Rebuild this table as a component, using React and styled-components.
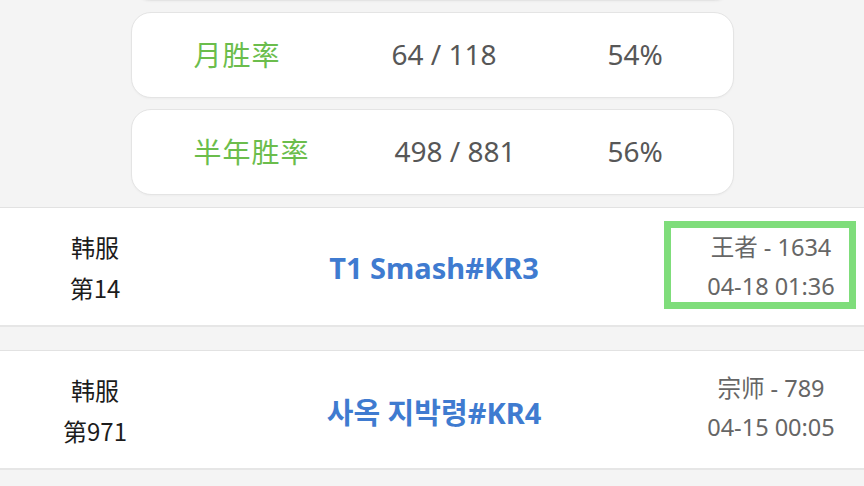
import React from "react";
import styled, { createGlobalStyle } from "styled-components";

const GlobalStyle = createGlobalStyle`
  html, body {
    margin: 0;
    padding: 0;
    background: #f4f4f4;
  }
  body {
    font-family: "Noto Sans", "Noto Sans CJK SC", sans-serif;
  }
`;

const Page = styled.div`
  width: 864px;
  height: 486px;
  overflow: hidden;
  background: #f4f4f4;
`;

const StatsList = styled.div`
  display: flex;
  flex-direction: column;
  align-items: center;
  gap: 11px;
  margin-top: -85px;
`;

const StatCard = styled.div`
  box-sizing: border-box;
  width: 603px;
  height: 86px;
  background: #fff;
  border: 1px solid #e4e4e4;
  border-radius: 20px;
  box-shadow: 0 1px 2px rgba(0, 0, 0, 0.03);
  display: grid;
  grid-template-columns: 198px 216px auto;
  align-items: center;
  padding-left: 62px;
  padding-bottom: 3px;
`;

const StatLabel = styled.div`
  font-family: "Noto Sans CJK SC", sans-serif;
  font-size: 28px;
  color: #6bbd4c;
  letter-spacing: 1px;
`;

const StatValue = styled.div`
  font-family: "Noto Sans", sans-serif;
  font-size: 28px;
  color: #575757;
  padding-left: ${(p) => p.$indent || 0}px;
`;

const RankList = styled.div`
  display: flex;
  flex-direction: column;
  gap: 23px;
  margin-top: 12px;
`;

const RankRow = styled.div`
  box-sizing: border-box;
  height: 120px;
  background: #fff;
  border-top: 1px solid #e2e2e2;
  border-bottom: 2px solid #e6e6e6;
  display: grid;
  grid-template-columns: 190px 1fr 186px;
  align-items: center;
`;

const Server = styled.div`
  font-family: "Noto Sans CJK SC", sans-serif;
  font-size: 24px;
  line-height: 41px;
  color: #1c1c1c;
  text-align: center;
`;

const Player = styled.div`
  font-family: "Noto Sans", "Noto Sans CJK KR", sans-serif;
  font-size: 29px;
  font-weight: 700;
  color: #3f7bd0;
  text-align: center;
  margin-top: 2px;
`;

const Rank = styled.div`
  position: relative;
  font-family: "Noto Sans", "Noto Sans CJK SC", sans-serif;
  font-size: 23.5px;
  line-height: 39px;
  color: #666;
  text-align: center;
  margin-top: ${(p) => (p.$highlight ? 0 : -4)}px;

  &::after {
    content: "";
    display: ${(p) => (p.$highlight ? "block" : "none")};
    position: absolute;
    left: -14px;
    right: 8px;
    top: -7px;
    bottom: -3px;
    border: 7px solid #7fdd7b;
  }
`;

const stats = [
  { label: "", value: "", pct: "" },
  { label: "月胜率", value: "64 / 118", pct: "54%", indent: 0 },
  { label: "半年胜率", value: "498 / 881", pct: "56%", indent: 3 },
];

const ranks = [
  { server: "韩服", place: "第14", name: "T1 Smash#KR3", tier: "王者 - 1634", time: "04-18 01:36", highlight: true },
  { server: "韩服", place: "第971", name: "사옥 지박령#KR4", tier: "宗师 - 789", time: "04-15 00:05" },
];

export default function App() {
  return (
    <Page>
      <GlobalStyle />
      <StatsList>
        {stats.map((s, i) => (
          <StatCard key={i}>
            <StatLabel>{s.label}</StatLabel>
            <StatValue $indent={s.indent}>{s.value}</StatValue>
            <StatValue>{s.pct}</StatValue>
          </StatCard>
        ))}
      </StatsList>
      <RankList>
        {ranks.map((r, i) => (
          <RankRow key={i}>
            <Server>
              {r.server}
              <br />
              {r.place}
            </Server>
            <Player>{r.name}</Player>
            <Rank $highlight={r.highlight}>
              {r.tier}
              <br />
              {r.time}
            </Rank>
          </RankRow>
        ))}
      </RankList>
    </Page>
  );
}
